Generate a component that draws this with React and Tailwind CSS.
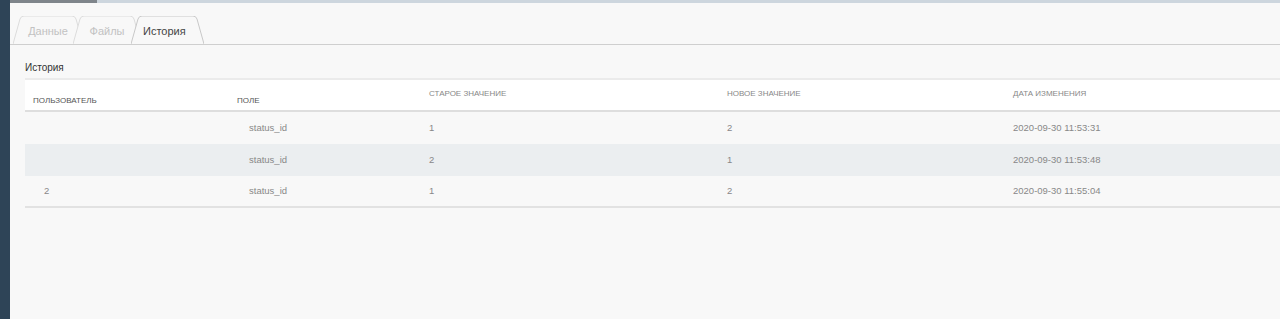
const tabs = [
  { label: "Данные", width: 70 },
  { label: "Файлы", width: 68 },
  { label: "История", width: 73, active: true },
];

const rows = [
  { user: "", field: "status_id", oldValue: "1", newValue: "2", date: "2020-09-30 11:53:31" },
  { user: "", field: "status_id", oldValue: "2", newValue: "1", date: "2020-09-30 11:53:48", hl: true },
  { user: "2", field: "status_id", oldValue: "1", newValue: "2", date: "2020-09-30 11:55:04" },
];

function Tab({ tab, first }) {
  const w = tab.width;
  const d = `M0,28 L7,3 Q8,0 11,0 L${w - 11},0 Q${w - 8},0 ${w - 7},3 L${w},28`;
  return (
    <div
      className={`relative h-[28px] flex items-center ${
        first ? "ml-[3px]" : "-ml-[10px]"
      } ${tab.active ? "z-10 justify-start pl-[12px]" : "justify-center"}`}
      style={{ width: w }}
    >
      <svg className="absolute inset-0" width={w} height="28" viewBox={`0 0 ${w} 28`}>
        <path d={d} fill="#f8f8f8" stroke={tab.active ? "#c8c8c8" : "#dcdcdc"} strokeWidth="1" />
      </svg>
      <span
        className={`relative text-[11px] pt-[2px] ${
          tab.active ? "text-[#444]" : "text-[#c2c2c2]"
        }`}
      >
        {tab.label}
      </span>
    </div>
  );
}

export default function App() {
  return (
    <div className="flex h-[319px] w-[1280px] overflow-hidden font-['Liberation_Sans',Arial,sans-serif]">
      {/* sidebar edge */}
      <div className="w-[10px] shrink-0 bg-[#2e4457]" />

      <main className="flex-1 flex flex-col bg-[#f8f8f8] min-w-0">
        <div className="h-[3px] flex shrink-0">
          <div className="w-[87px] bg-[#7f858b]" />
          <div className="flex-1 bg-[#cdd6de]" />
        </div>

        {/* tabs */}
        <div className="mt-[14px] flex items-end border-b border-[#cfcfcf] h-[28px]">
          {tabs.map((t, i) => (
            <Tab key={t.label} tab={t} first={i === 0} />
          ))}
        </div>

        <section className="pl-[15px]">
          <div className="pt-[17px] pb-[4px] text-[10px] leading-[12px] text-[#333] border-b-2 border-[#ebebeb]">
            История
          </div>

          {/* header */}
          <div className="grid grid-cols-[204px_192px_298px_286px_1fr] h-[32px] bg-white border-b-2 border-[#dedede] text-[8px] leading-[10px] uppercase">
            <div className="flex items-end pb-[4px] pl-[8px] text-[#555]">Пользователь</div>
            <div className="flex items-end pb-[4px] pl-[8px] text-[#555]">Поле</div>
            <div className="flex items-center pl-[8px] pb-[2px] text-[#888]">Старое значение</div>
            <div className="flex items-center pl-[8px] pb-[2px] text-[#888]">Новое значение</div>
            <div className="flex items-center pl-[8px] pb-[2px] text-[#888]">Дата изменения</div>
          </div>

          {rows.map((r, i) => (
            <div
              key={i}
              className={`grid grid-cols-[204px_192px_298px_286px_1fr] h-[32px] items-center text-[9.5px] text-[#888] ${
                r.hl ? "bg-[#ebeef0]" : ""
              } ${i === rows.length - 1 ? "border-b-2 border-[#e2e2e2]" : ""}`}
            >
              <div className="pl-[19px]">{r.user}</div>
              <div className="pl-[20px]">{r.field}</div>
              <div className="pl-[8px]">{r.oldValue}</div>
              <div className="pl-[8px]">{r.newValue}</div>
              <div className="pl-[8px]">{r.date}</div>
            </div>
          ))}
        </section>
      </main>
    </div>
  );
}
